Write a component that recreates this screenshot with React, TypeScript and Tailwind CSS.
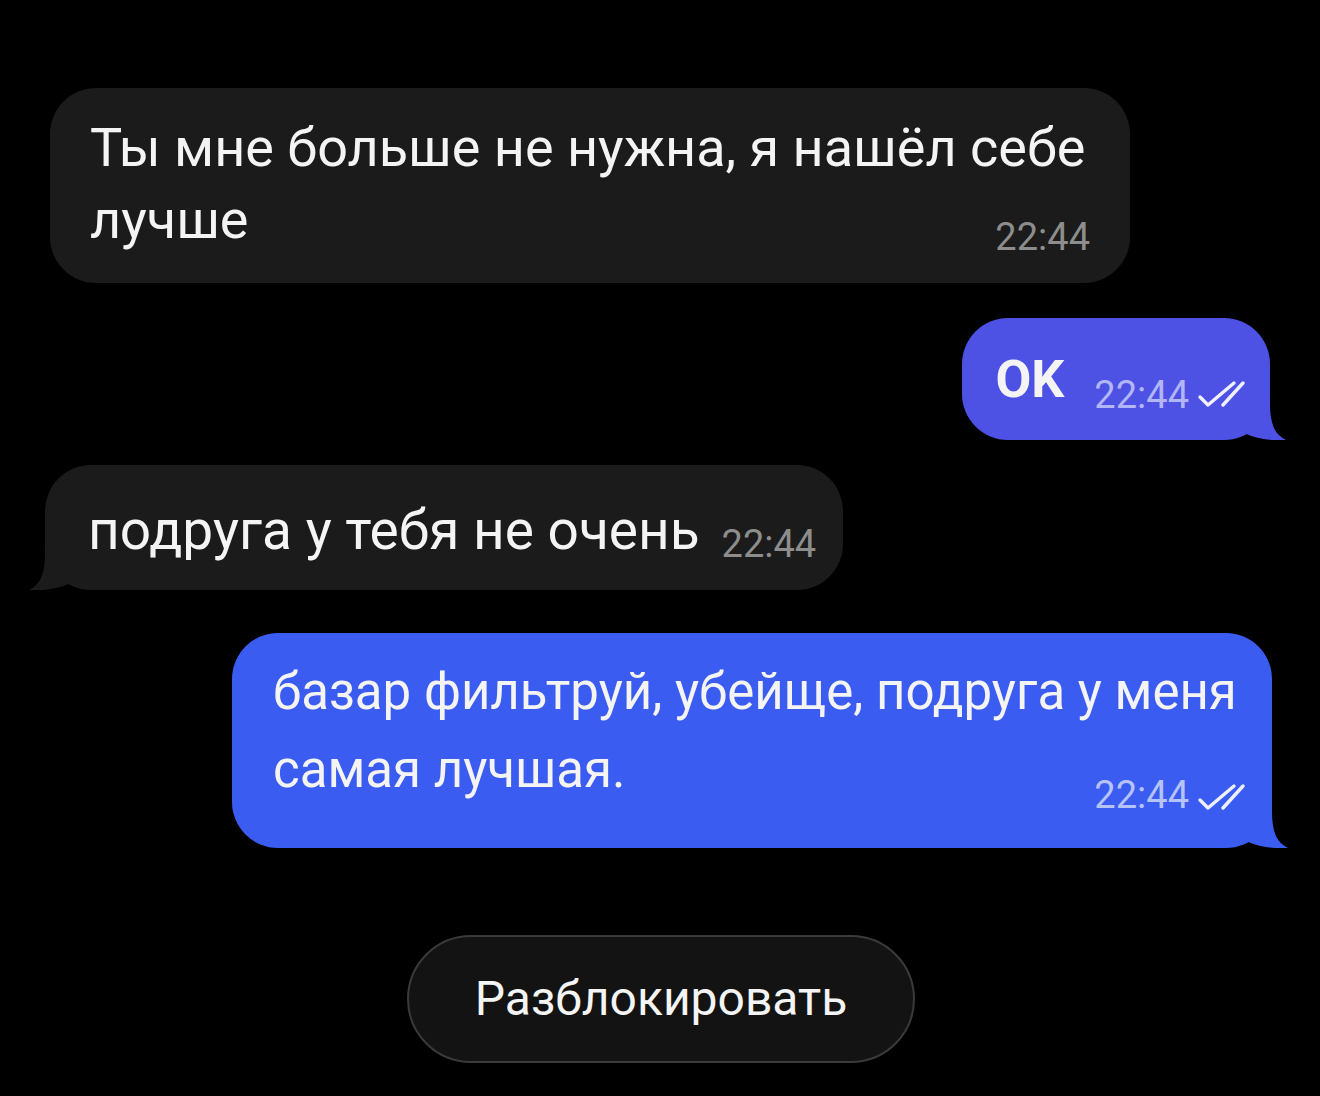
import React from 'react';

type Side = 'left' | 'right';

function Tail({ side, color }: { side: Side; color: string }) {
  // little hook under the bubble corner
  if (side === 'right') {
    return (
      <svg className="absolute bottom-0 right-[-16px]" width="56" height="50" viewBox="0 0 56 50">
        <path d="M4 0 H40 V14 C40 34 45 45 56 50 C44 51 28 49 16 44 L4 20 Z" fill={color} />
      </svg>
    );
  }
  return (
    <svg className="absolute bottom-0 left-[-16px]" width="56" height="50" viewBox="0 0 56 50">
      <path d="M52 0 H16 V14 C16 34 11 45 0 50 C12 51 28 49 40 44 L52 20 Z" fill={color} />
    </svg>
  );
}

function Checks() {
  return (
    <svg width="48" height="28" viewBox="0 0 48 28" fill="none" stroke="#eef0ff" strokeWidth="3.4" strokeLinecap="round" strokeLinejoin="round">
      <path d="M3 17 L11 25 L37 3" />
      <path d="M26 25 L46 3" />
    </svg>
  );
}

export default function App() {
  return (
    <div className="w-[1320px] h-[1096px] bg-black overflow-hidden font-['Roboto',sans-serif] text-[#f4f4f4]">
      <div className="flex flex-col pt-[88px]">
        {/* incoming */}
        <div className="ml-[50px] w-[1080px] h-[195px] rounded-[46px] bg-[#1b1b1b] pl-[40px] pr-[40px] pt-[24px] text-[54px] leading-[72px]">
          <div className="whitespace-nowrap">Ты мне больше не нужна, я нашёл себе</div>
          <div className="flex items-end justify-between">
            <span>лучше</span>
            <span className="text-[38px] leading-none text-[#8d8d8d]">22:44</span>
          </div>
        </div>

        {/* outgoing OK */}
        <div className="self-end mr-[50px] mt-[35px] relative">
          <div className="relative z-10 flex items-end h-[122px] rounded-[46px] bg-[#4d52e4] pl-[33px] pr-[25px] pb-[24px]">
            <span className="text-[52px] leading-[72px] font-bold">OK</span>
            <span className="ml-[30px] mb-[2px] text-[38px] leading-none text-[#b3b6f6]">22:44</span>
            <span className="ml-[8px] mb-[8px]"><Checks /></span>
          </div>
          <Tail side="right" color="#4d52e4" />
        </div>

        {/* incoming */}
        <div className="ml-[45px] mt-[25px] relative self-start">
          <div className="relative z-10 flex items-end h-[125px] w-[798px] rounded-[46px] bg-[#1b1b1b] pl-[43px] pb-[24px]">
            <span className="text-[55px] leading-[72px] whitespace-nowrap">подруга у тебя не очень</span>
            <span className="ml-[22px] mb-[3px] text-[38px] leading-none text-[#8d8d8d]">22:44</span>
          </div>
          <Tail side="left" color="#1b1b1b" />
        </div>

        {/* outgoing long */}
        <div className="self-end mr-[48px] mt-[43px] relative">
          <div className="relative z-10 w-[1040px] h-[215px] rounded-[46px] bg-[#3b5cf0] pl-[41px] pr-[27px] pt-[20px] text-[51px] leading-[78px]">
            <div className="whitespace-nowrap">базар фильтруй, убейще, подруга у меня</div>
            <div className="flex items-end">
              <span className="flex-1">самая лучшая.</span>
              <span className="mb-[-5px] text-[38px] leading-none text-[#b6c3fa]">22:44</span>
              <span className="ml-[8px] mb-[-2px]"><Checks /></span>
            </div>
          </div>
          <Tail side="right" color="#3b5cf0" />
        </div>

        {/* unblock */}
        <div className="mt-[87px] flex justify-center">
          <button className="ml-[2px] w-[508px] h-[128px] rounded-full bg-[#131313] border-2 border-[#3a3a3a] text-[48px] text-[#f4f4f4]">
            Разблокировать
          </button>
        </div>
      </div>
    </div>
  );
}
